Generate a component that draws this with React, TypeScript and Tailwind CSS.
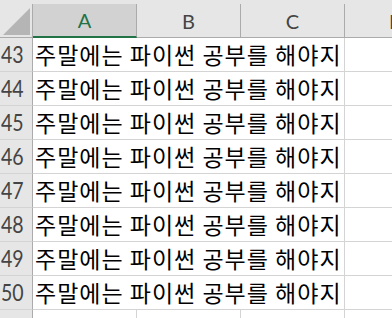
const rows = [43, 44, 45, 46, 47, 48, 49, 50];
const cols = ["A", "B", "C", "D"];
const text = "주말에는 파이썬 공부를 해야지";

const gridCls = "grid grid-cols-[33px_104px_104px_104px_104px]";
const headFont = { fontFamily: "Lato, 'Liberation Sans', sans-serif" };
const cellFont = { fontFamily: "'Noto Sans CJK KR', 'Noto Sans', sans-serif" };

export default function App() {
  return (
    <div className="h-[318px] w-[392px] overflow-hidden bg-white">
      {/* column headers */}
      <div className={`${gridCls} h-[38px] bg-[#e6e6e6] pt-[4px]`}>
        <div className="relative border-r border-b border-[#ababab]">
          <svg className="absolute left-[3px] top-[4px]" width="27" height="27" viewBox="0 0 27 27">
            <polygon points="0,27 27,27 27,0" fill="#b5b5b5" />
          </svg>
        </div>
        {cols.map((c) =>
          c === "A" ? (
            <div
              key={c}
              className="flex items-center justify-center border-r border-[#ababab] border-b-[2px] border-b-[#217346] bg-[#d2d2d2] text-[20px] text-[#217346]"
              style={headFont}
            >
              {c}
            </div>
          ) : (
            <div
              key={c}
              className="flex items-center justify-center border-r border-b border-[#ababab] text-[20px] text-[#444444]"
              style={headFont}
            >
              {c}
            </div>
          )
        )}
      </div>

      {rows.map((r) => (
        <div key={r} className={`${gridCls} h-[34px]`}>
          <div
            className="flex items-center overflow-hidden border-r border-b border-r-[#ababab] border-b-[#d4d4d4] bg-[#e6e6e6] pl-[1px] text-[23px] text-[#444444]"
            style={headFont}
          >
            <span className="inline-block origin-left scale-x-[0.85]">{r}</span>
          </div>
          <div className="relative border-b border-[#d4d4d4]">
            <span
              className="absolute left-[2px] top-0 flex h-full items-center whitespace-nowrap text-[23px] tracking-[1px] text-black"
              style={cellFont}
            >
              {text}
            </span>
          </div>
          <div className="border-b border-[#d4d4d4]" />
          <div className="border-b border-r border-[#d4d4d4]" />
          <div className="border-b border-r border-[#d4d4d4]" />
        </div>
      ))}

      <div className={`${gridCls} h-[34px]`}>
        <div className="border-r border-[#ababab] bg-[#e6e6e6]" />
        <div className="border-r border-[#d4d4d4]" />
        <div className="border-r border-[#d4d4d4]" />
        <div className="border-r border-[#d4d4d4]" />
        <div />
      </div>
    </div>
  );
}
